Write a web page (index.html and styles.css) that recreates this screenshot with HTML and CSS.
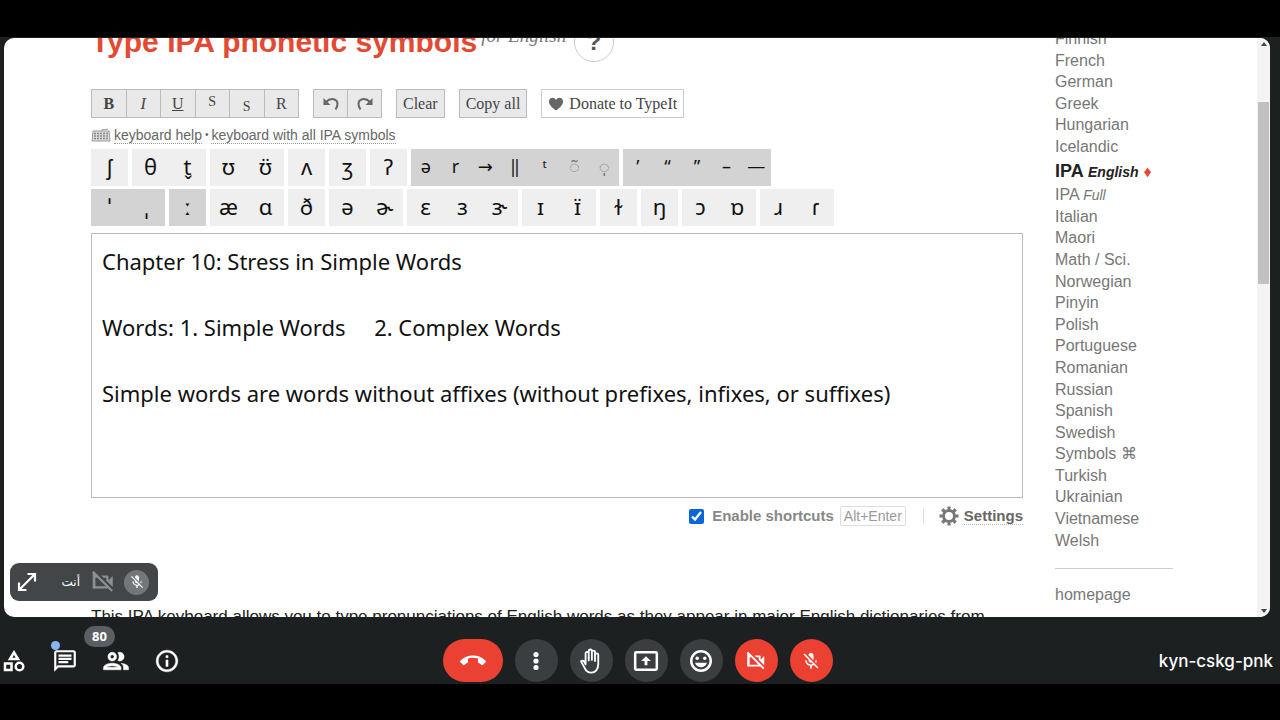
FILE: index.html
```html
<!DOCTYPE html>
<html lang="en">
<head>
<meta charset="UTF-8">
<meta name="viewport" content="width=device-width, initial-scale=1.0">
<title>Meet - kyn-cskg-pnk</title>
<link rel="stylesheet" href="styles.css">
</head>
<body>
<div class="meet">
  <div class="screen">
    <main class="content">
      <header class="title">
        <h1>Type IPA phonetic symbols</h1>
        <em>for English</em>
        <button type="button" class="help">?</button>
      </header>

      <div class="toolbar">
        <div class="group format">
          <button type="button"><b>B</b></button>
          <button type="button"><i>I</i></button>
          <button type="button"><u>U</u></button>
          <button type="button"><sup>S</sup></button>
          <button type="button"><sub>S</sub></button>
          <button type="button">R</button>
        </div>
        <div class="group history">
          <button type="button" aria-label="Undo"><svg width="18" height="18" viewBox="0 0 18 18"><path d="M4 7C9 2 15.500 4 15.500 9c0 2-.6 3.500-2 5.500" fill="none" stroke="#666" stroke-width="2"/><path d="M1.500 3v7h7z" fill="#666"/></svg></button>
          <button type="button" aria-label="Redo"><svg width="18" height="18" viewBox="0 0 18 18"><path d="M14 7C9 2 2.500 4 2.500 9c0 2 .6 3.500 2 5.500" fill="none" stroke="#666" stroke-width="2"/><path d="M16.500 3v7h-7z" fill="#666"/></svg></button>
        </div>
        <button type="button">Clear</button>
        <button type="button">Copy all</button>
        <button type="button" class="donate"><svg width="16" height="16" viewBox="0 0 16 16"><path d="M8 14.500C4 11.500 1 9 1 5.500 1 1.500 6 .5 8 4c2-3.500 7-2.500 7 1.500 0 3.500-3 6-7 9z" fill="#666"/></svg>Donate to TypeIt</button>
      </div>

      <div class="links">
        <svg width="20" height="14" viewBox="0 0 20 14"><path d="M2 3h16l1 10H1zM10 3c0-2 4-1 7-2" fill="#ddd" stroke="#999"/><path d="M3 5.500h14M3 8h14M3 10.500h2M6 10.500h8M15 10.500h2" stroke="#888" stroke-width="1.500" stroke-dasharray="2 1"/></svg>
        <a href="#">keyboard help</a> <span>•</span> <a href="#">keyboard with all IPA symbols</a>
      </div>

      <div class="keys">
        <div class="key-row">
          <div class="key-group"><button type="button">ʃ</button></div>
          <div class="key-group"><button type="button">θ</button><button type="button">t̬</button></div>
          <div class="key-group"><button type="button">ʊ</button><button type="button">ʊ̈</button></div>
          <div class="key-group"><button type="button">ʌ</button></div>
          <div class="key-group"><button type="button">ʒ</button></div>
          <div class="key-group"><button type="button">ʔ</button></div>
          <div class="key-group dark small marks"><button type="button">ə</button><button type="button">r</button><button type="button">→</button><button type="button">‖</button><button type="button">ᵗ</button><button type="button" class="faint">◌̃</button><button type="button" class="faint">◌̩</button></div>
          <div class="key-group dark small quotes"><button type="button">’</button><button type="button">“</button><button type="button">”</button><button type="button">–</button><button type="button">—</button></div>
        </div>
        <div class="key-row">
          <div class="key-group dark"><button type="button">ˈ</button><button type="button">ˌ</button></div>
          <div class="key-group dark"><button type="button"><b>ː</b></button></div>
          <div class="key-group"><button type="button">æ</button><button type="button">ɑ</button></div>
          <div class="key-group"><button type="button">ð</button></div>
          <div class="key-group"><button type="button">ə</button><button type="button">ɚ</button></div>
          <div class="key-group"><button type="button">ɛ</button><button type="button">ɜ</button><button type="button">ɝ</button></div>
          <div class="key-group"><button type="button">ɪ</button><button type="button">ɪ̈</button></div>
          <div class="key-group"><button type="button">ɫ</button></div>
          <div class="key-group"><button type="button">ŋ</button></div>
          <div class="key-group"><button type="button">ɔ</button><button type="button">ɒ</button></div>
          <div class="key-group"><button type="button">ɹ</button><button type="button">ɾ</button></div>
        </div>
      </div>

      <textarea class="editor" aria-label="Text" spellcheck="false">Chapter 10: Stress in Simple Words

Words: 1. Simple Words     2. Complex Words

Simple words are words without affixes (without prefixes, infixes, or suffixes)</textarea>

      <div class="options">
        <input type="checkbox" id="shortcuts" checked>
        <label for="shortcuts">Enable shortcuts</label>
        <kbd>Alt+Enter</kbd>
        <span class="divider"></span>
        <svg width="20" height="20" viewBox="0 0 20 20" fill="none" stroke="#777"><circle cx="10" cy="10" r="5.500" stroke-width="3"/><circle cx="10" cy="10" r="8" stroke-width="3" pathLength="16" stroke-dasharray="1 1" stroke-dashoffset="0.500"/></svg>
        <a href="#">Settings</a>
      </div>

      <p class="intro">This IPA keyboard allows you to type pronunciations of English words as they appear in major English dictionaries from</p>
    </main>

    <nav class="languages">
      <ul>
        <li><a href="#">Finnish</a></li>
        <li><a href="#">French</a></li>
        <li><a href="#">German</a></li>
        <li><a href="#">Greek</a></li>
        <li><a href="#">Hungarian</a></li>
        <li><a href="#">Icelandic</a></li>
        <li class="current"><a href="#">IPA <em>English</em></a> <span>♦</span></li>
        <li><a href="#">IPA <em>Full</em></a></li>
        <li><a href="#">Italian</a></li>
        <li><a href="#">Maori</a></li>
        <li><a href="#">Math / Sci.</a></li>
        <li><a href="#">Norwegian</a></li>
        <li><a href="#">Pinyin</a></li>
        <li><a href="#">Polish</a></li>
        <li><a href="#">Portuguese</a></li>
        <li><a href="#">Romanian</a></li>
        <li><a href="#">Russian</a></li>
        <li><a href="#">Spanish</a></li>
        <li><a href="#">Swedish</a></li>
        <li><a href="#">Symbols ⌘</a></li>
        <li><a href="#">Turkish</a></li>
        <li><a href="#">Ukrainian</a></li>
        <li><a href="#">Vietnamese</a></li>
        <li><a href="#">Welsh</a></li>
      </ul>
      <hr>
      <a href="#">homepage</a>
    </nav>

    <div class="scrollbar">
      <svg width="6" height="4" viewBox="0 0 6 4"><path d="M0 4l3-4 3 4z" fill="#444"/></svg>
      <div class="thumb"></div>
      <svg width="6" height="4" viewBox="0 0 6 4"><path d="M0 0l3 4 3-4z" fill="#444"/></svg>
    </div>

    <div class="self-view">
      <svg width="24" height="24" viewBox="0 0 24 24" fill="none" stroke="#fff" stroke-width="2.200"><path d="M4.500 19.500l15-15M12.500 4h7.500v7.500M4 12.500V20h7.500"/></svg>
      <span class="name" lang="ar" dir="rtl">أنت</span>
      <svg width="26" height="26" viewBox="0 0 24 24" fill="#8d9093"><path d="M9.560 8l-2-2-4.150-4.140L2 3.270 4.730 6H4c-.55 0-1 .45-1 1v10c0 .55.45 1 1 1h12c.21 0 .39-.08.55-.18L19.730 21l1.410-1.410-8.860-8.860L9.560 8zM5 16V8h1.730l8 8H5zm10-8v2.610l6 6V6.500l-4 4V7c0-.55-.45-1-1-1h-5.610l2 2H15z"/><path d="M2.500 3h2v15h-2z"/></svg>
      <span class="muted"><svg width="16" height="16" viewBox="0 0 24 24" fill="#fff"><path d="M19 11h-1.700c0 .74-.16 1.430-.43 2.050l1.230 1.230c.56-.98.9-2.090.9-3.280zm-4.020.17c0-.06.02-.11.02-.17V5c0-1.660-1.340-3-3-3S9 3.340 9 5v.18l5.980 5.990zM4.270 3L3 4.270l6.010 6.010V11c0 1.660 1.330 3 2.990 3 .22 0 .44-.03.65-.08l1.660 1.660c-.71.33-1.500.52-2.310.52-2.760 0-5.300-2.100-5.300-5.100H5c0 3.410 2.720 6.230 6 6.720V21h2v-3.280c.91-.13 1.770-.45 2.540-.9L19.730 21 21 19.730 4.270 3z"/></svg></span>
    </div>
  </div>

  <footer class="bar">
    <div class="panels">
      <button type="button" aria-label="Activities"><svg width="24" height="24" viewBox="0 0 24 24" fill="none" stroke="#fff" stroke-width="2.500"><path d="M12 3.500l-4 6.500h8z"/><rect x="3" y="14.500" width="6.500" height="6.500"/><circle cx="17.500" cy="17.500" r="3.800"/></svg></button>
      <button type="button" aria-label="Chat"><svg width="26" height="26" viewBox="0 0 24 24" fill="#fff"><path d="M4 4h16v12H5.170L4 17.170V4m0-2c-1.100 0-1.990.9-1.990 2L2 22l4-4h14c1.100 0 2-.9 2-2V4c0-1.100-.9-2-2-2H4zm2 10h9v2H6v-2zm0-3h12v2H6V9zm0-3h12v2H6V6z"/></svg><span class="dot"></span></button>
      <button type="button" aria-label="People"><svg width="30" height="30" viewBox="0 0 24 24" fill="#fff" stroke="#fff" stroke-width="0.400"><path d="M9 13.750c-2.340 0-7 1.170-7 3.500V19h14v-1.750c0-2.330-4.660-3.500-7-3.500zM4.340 17c.84-.58 2.870-1.250 4.660-1.250s3.820.67 4.660 1.250H4.340zM9 12c1.930 0 3.500-1.570 3.500-3.500S10.930 5 9 5 5.500 6.570 5.500 8.500 7.070 12 9 12zm0-5c.83 0 1.500.67 1.500 1.500S9.830 10 9 10s-1.500-.67-1.500-1.500S8.170 7 9 7zm7.040 6.810c1.160.84 1.960 1.960 1.960 3.440V19h4v-1.750c0-2.020-3.500-3.170-5.960-3.440zM15 12c1.930 0 3.500-1.570 3.500-3.500S16.930 5 15 5c-.54 0-1.040.13-1.500.35.63.89 1 1.980 1 3.150s-.37 2.260-1 3.150c.46.22.96.35 1.500.35z"/></svg><span class="count">80</span></button>
      <button type="button" aria-label="Info"><svg width="26" height="26" viewBox="0 0 24 24" fill="#fff" stroke="#fff" stroke-width="0.400"><path d="M11 7h2v2h-2zm0 4h2v6h-2zm1-9C6.480 2 2 6.480 2 12s4.480 10 10 10 10-4.480 10-10S17.520 2 12 2zm0 18c-4.410 0-8-3.590-8-8s3.590-8 8-8 8 3.590 8 8-3.590 8-8 8z"/></svg></button>
    </div>

    <div class="controls">
      <button type="button" class="red hangup" aria-label="Leave call"><svg width="26" height="26" viewBox="0 0 24 24" fill="#fff"><path d="M12 9c-1.600 0-3.150.25-4.600.72v3.100c0 .39-.23.74-.56.9-.98.49-1.870 1.120-2.660 1.850-.18.18-.43.28-.7.28-.28 0-.53-.11-.71-.29L.29 13.080c-.18-.17-.29-.42-.29-.7 0-.28.11-.53.29-.71C3.340 8.780 7.460 7 12 7s8.660 1.780 11.710 4.670c.18.18.29.43.29.71 0 .28-.11.53-.29.71l-2.480 2.480c-.18.18-.43.29-.71.29-.27 0-.52-.11-.7-.28-.79-.74-1.690-1.360-2.670-1.850-.33-.16-.56-.5-.56-.9v-3.100C15.150 9.250 13.600 9 12 9z"/></svg></button>
      <button type="button" aria-label="More options"><svg width="24" height="24" viewBox="0 0 24 24" fill="#fff"><circle cx="12" cy="5.500" r="2.600"/><circle cx="12" cy="12" r="2.600"/><circle cx="12" cy="18.500" r="2.600"/></svg></button>
      <button type="button" aria-label="Raise hand"><svg width="26" height="26" viewBox="0 0 24 24" fill="none" stroke="#fff" stroke-width="1.700" stroke-linejoin="round" stroke-linecap="round"><path d="M7 15V5a1.400 1.400 0 0 1 2.900 0v6.500M9.900 11V2.800a1.400 1.400 0 0 1 2.900 0V11M12.800 11V3.800a1.400 1.400 0 0 1 2.900 0v7.700M15.700 12V6.500a1.500 1.500 0 0 1 3 0v8.500c0 4.700-2.700 7.800-6.400 7.800-3.200 0-5-1.600-6.200-4.400L2.800 12.300c1.200-1 2.400-.6 3.100.5L7 15"/></svg></button>
      <button type="button" aria-label="Present now"><svg width="26" height="26" viewBox="0 0 24 24"><rect x="2" y="4" width="20" height="16" rx="1" fill="none" stroke="#fff" stroke-width="2.300"/><path d="M12 7.500L7.500 12H10.700v4h2.600v-4h3.200z" fill="#fff"/></svg></button>
      <button type="button" aria-label="Reactions"><svg width="26" height="26" viewBox="0 0 24 24"><circle cx="12" cy="12" r="9" fill="none" stroke="#fff" stroke-width="2.300"/><circle cx="8.500" cy="9.500" r="1.600" fill="#fff"/><circle cx="15.500" cy="9.500" r="1.600" fill="#fff"/><path d="M6.500 13.500h11c-.8 2.600-2.900 4.200-5.500 4.200s-4.700-1.600-5.500-4.200z" fill="#fff"/></svg></button>
      <button type="button" class="red" aria-label="Turn on camera"><svg width="22" height="22" viewBox="0 0 24 24" fill="#fff"><path d="M9.560 8l-2-2-4.150-4.140L2 3.270 4.730 6H4c-.55 0-1 .45-1 1v10c0 .55.45 1 1 1h12c.21 0 .39-.08.55-.18L19.730 21l1.410-1.410-8.860-8.860L9.560 8zM5 16V8h1.730l8 8H5zm10-8v2.610l6 6V6.500l-4 4V7c0-.55-.45-1-1-1h-5.610l2 2H15z"/><path d="M2.500 3h2v15h-2z"/></svg></button>
      <button type="button" class="red" aria-label="Turn on microphone"><svg width="20" height="20" viewBox="0 0 24 24" fill="#fff"><path d="M19 11h-1.700c0 .74-.16 1.430-.43 2.050l1.230 1.230c.56-.98.9-2.090.9-3.280zm-4.020.17c0-.06.02-.11.02-.17V5c0-1.660-1.340-3-3-3S9 3.340 9 5v.18l5.980 5.990zM4.270 3L3 4.270l6.010 6.010V11c0 1.660 1.330 3 2.990 3 .22 0 .44-.03.65-.08l1.660 1.660c-.71.33-1.500.52-2.310.52-2.760 0-5.300-2.100-5.300-5.100H5c0 3.410 2.720 6.230 6 6.720V21h2v-3.280c.91-.13 1.770-.45 2.540-.9L19.730 21 21 19.730 4.270 3z"/></svg></button>
    </div>

    <div class="code">kyn-cskg-pnk</div>
  </footer>
</div>
</body>
</html>
```
FILE: styles.css
```css
* {
  box-sizing: border-box;
}
body {
  margin: 0;
  height: 100vh;
  padding: 37px 0 36px;
  background: #000;
  font-family: "Liberation Sans", Arial, sans-serif;
  overflow: hidden;
}
button {
  margin: 0;
  padding: 0;
  border: none;
  background: none;
  font: inherit;
  color: inherit;
  cursor: pointer;
}
svg {
  display: block;
  flex: none;
}
.meet {
  display: flex;
  flex-direction: column;
  height: 100%;
  padding-top: 1px;
  background: #1d2021;
}

/* shared screen */
.screen {
  position: relative;
  display: flex;
  flex: 1;
  min-height: 0;
  margin: 0 10px 0 4px;
  background: #fff;
  border-radius: 10px;
  overflow: hidden;
}
.content {
  flex: 1;
  min-width: 0;
  padding-left: 87px;
}
.title {
  display: flex;
  align-items: center;
  height: 40px;
  margin: -16px 0 27px;
}
.title h1 {
  margin: 0 4px 0 0;
  font-size: 30px;
  line-height: 40px;
  color: #e34a33;
}
.title em {
  font: italic 19px/28px "Liberation Serif", serif;
  color: #777;
  align-self: flex-start;
}
.help {
  width: 40px;
  height: 40px;
  margin-left: 8px;
  border: 1px solid #ccc;
  border-radius: 50%;
  font-size: 24px;
  font-weight: bold;
  color: #555;
}

.toolbar {
  display: flex;
  gap: 14px;
  font: 16px/20px "Liberation Serif", serif;
  color: #444;
}
.toolbar button {
  display: flex;
  align-items: center;
  justify-content: center;
  height: 29px;
  padding: 0 6px;
  border: 1px solid #bbb;
  background: #e9e9e9;
}
.group {
  display: flex;
}
.toolbar .group button {
  flex: 1;
  padding: 0;
}
.toolbar .group button + button {
  border-left: none;
}
.format {
  width: 208px;
}
.history {
  width: 69px;
}
.toolbar sup,
.toolbar sub {
  font-size: 14px;
}
.toolbar sup {
  padding-bottom: 4px;
}
.toolbar sub {
  padding-top: 6px;
}
.toolbar .donate {
  gap: 5px;
  background: #fff;
  border-color: #ccc;
}

.links {
  display: flex;
  align-items: center;
  gap: 3px;
  height: 31px;
  padding-top: 3px;
  font-size: 14px;
  line-height: 16px;
  color: #666;
}
.links a {
  color: #666;
  text-decoration: none;
  border-bottom: 1px dotted #999;
}
.links span {
  font-size: 10px;
}

.key-row {
  display: flex;
  gap: 4px;
  margin-bottom: 3px;
}
.key-group {
  display: flex;
  background: #efefef;
}
.key-group button {
  width: 37px;
  height: 37px;
  padding-bottom: 4px;
  font: 22px/32px "Noto Sans", "DejaVu Sans", sans-serif;
  color: #111;
}
.key-group.dark {
  background: #d3d3d3;
}
.key-group.small button {
  flex: 1;
  min-width: 0;
  font-size: 18px;
}
.key-group .faint {
  color: #777;
}
.marks {
  width: 208px;
}
.quotes {
  width: 148px;
}

.editor {
  display: block;
  width: 100%;
  height: 265px;
  margin-top: 7px;
  padding: 11px 10px;
  border: 1px solid #bbb;
  font: 22px/33px "Noto Sans", sans-serif;
  color: #111;
  resize: none;
  outline: none;
}
.options {
  display: flex;
  align-items: center;
  justify-content: flex-end;
  height: 36px;
  font-size: 15px;
  line-height: 16px;
  font-weight: bold;
  color: #888;
}
.options input {
  width: 15px;
  height: 15px;
  margin: 0 8px 0 0;
  accent-color: #0b66d8;
}
.options kbd {
  margin-left: 6px;
  padding: 0 3px;
  border: 1px solid #ddd;
  border-radius: 2px;
  font: 14px/18px "Liberation Sans", Arial, sans-serif;
  color: #999;
}
.divider {
  width: 1px;
  height: 16px;
  margin: 0 15px 0 17px;
  background: #ddd;
}
.options a {
  margin-left: 5px;
  color: #666;
  text-decoration: none;
  border-bottom: 1px dotted #bbb;
}
.intro {
  margin: 73px 0 0;
  font-size: 17px;
  line-height: 20px;
  color: #222;
  white-space: nowrap;
}

/* language list */
.languages {
  display: flex;
  flex-direction: column;
  width: 202px;
  margin: -8px 0 0 32px;
  font-size: 16px;
  line-height: 18px;
}
.languages ul {
  display: flex;
  flex: 1;
  flex-direction: column;
  justify-content: space-between;
  margin: 0;
  padding: 0;
  list-style: none;
}
.languages a {
  color: #777;
  text-decoration: none;
}
.languages em {
  font-size: 14px;
}
.languages .current {
  font-size: 18px;
  font-weight: bold;
  line-height: 22px;
}
.languages .current a {
  color: #222;
}
.current span {
  color: #e34a33;
  font-size: 16px;
}
.languages hr {
  width: 118px;
  margin: 18px 0 17px;
  border: none;
  border-top: 1px solid #ccc;
}
.languages > a {
  margin-bottom: 13px;
}

.scrollbar {
  display: flex;
  flex-direction: column;
  align-items: center;
  width: 13px;
  padding: 4px 0;
  background: #f4f4f4;
}
.thumb {
  width: 11px;
  height: 182px;
  margin: 56px 0 auto;
  background: #c1c1c1;
}

.self-view {
  position: absolute;
  left: 6px;
  bottom: 16px;
  display: flex;
  align-items: center;
  width: 148px;
  height: 38px;
  padding: 0 9px 0 5px;
  border-radius: 9px;
  background: #424648;
}
.name {
  margin: 0 10px 0 auto;
  font: 12px/16px "DejaVu Sans", sans-serif;
  color: #fff;
}
.muted {
  display: flex;
  align-items: center;
  justify-content: center;
  width: 25px;
  height: 25px;
  margin-left: 8px;
  border-radius: 50%;
  background: #73777a;
}

/* bottom bar */
.bar {
  display: grid;
  grid-template-columns: 1fr auto 1fr;
  align-items: center;
  height: 67px;
  padding: 20px 7px 0 2px;
  color: #fff;
}
.panels {
  display: flex;
  gap: 27px;
}
.panels button {
  position: relative;
  display: flex;
  align-items: center;
  justify-content: center;
  width: 24px;
  height: 24px;
}
.dot {
  position: absolute;
  left: -2px;
  top: -8px;
  width: 9px;
  height: 9px;
  border-radius: 50%;
  background: #8ab4f8;
}
.count {
  position: absolute;
  left: -20px;
  top: -23px;
  width: 31px;
  height: 21px;
  border-radius: 11px;
  background: #5b5f63;
  font: bold 13px/21px "Open Sans", sans-serif;
}
.controls {
  display: flex;
  gap: 12px;
}
.controls button {
  display: flex;
  align-items: center;
  justify-content: center;
  width: 43px;
  height: 43px;
  border-radius: 22px;
  background: #3a3e41;
}
.controls .red {
  background: #ea4132;
}
.controls .hangup {
  width: 60px;
}
.code {
  font: 500 17px/24px Inter, sans-serif;
  text-align: right;
}
```
